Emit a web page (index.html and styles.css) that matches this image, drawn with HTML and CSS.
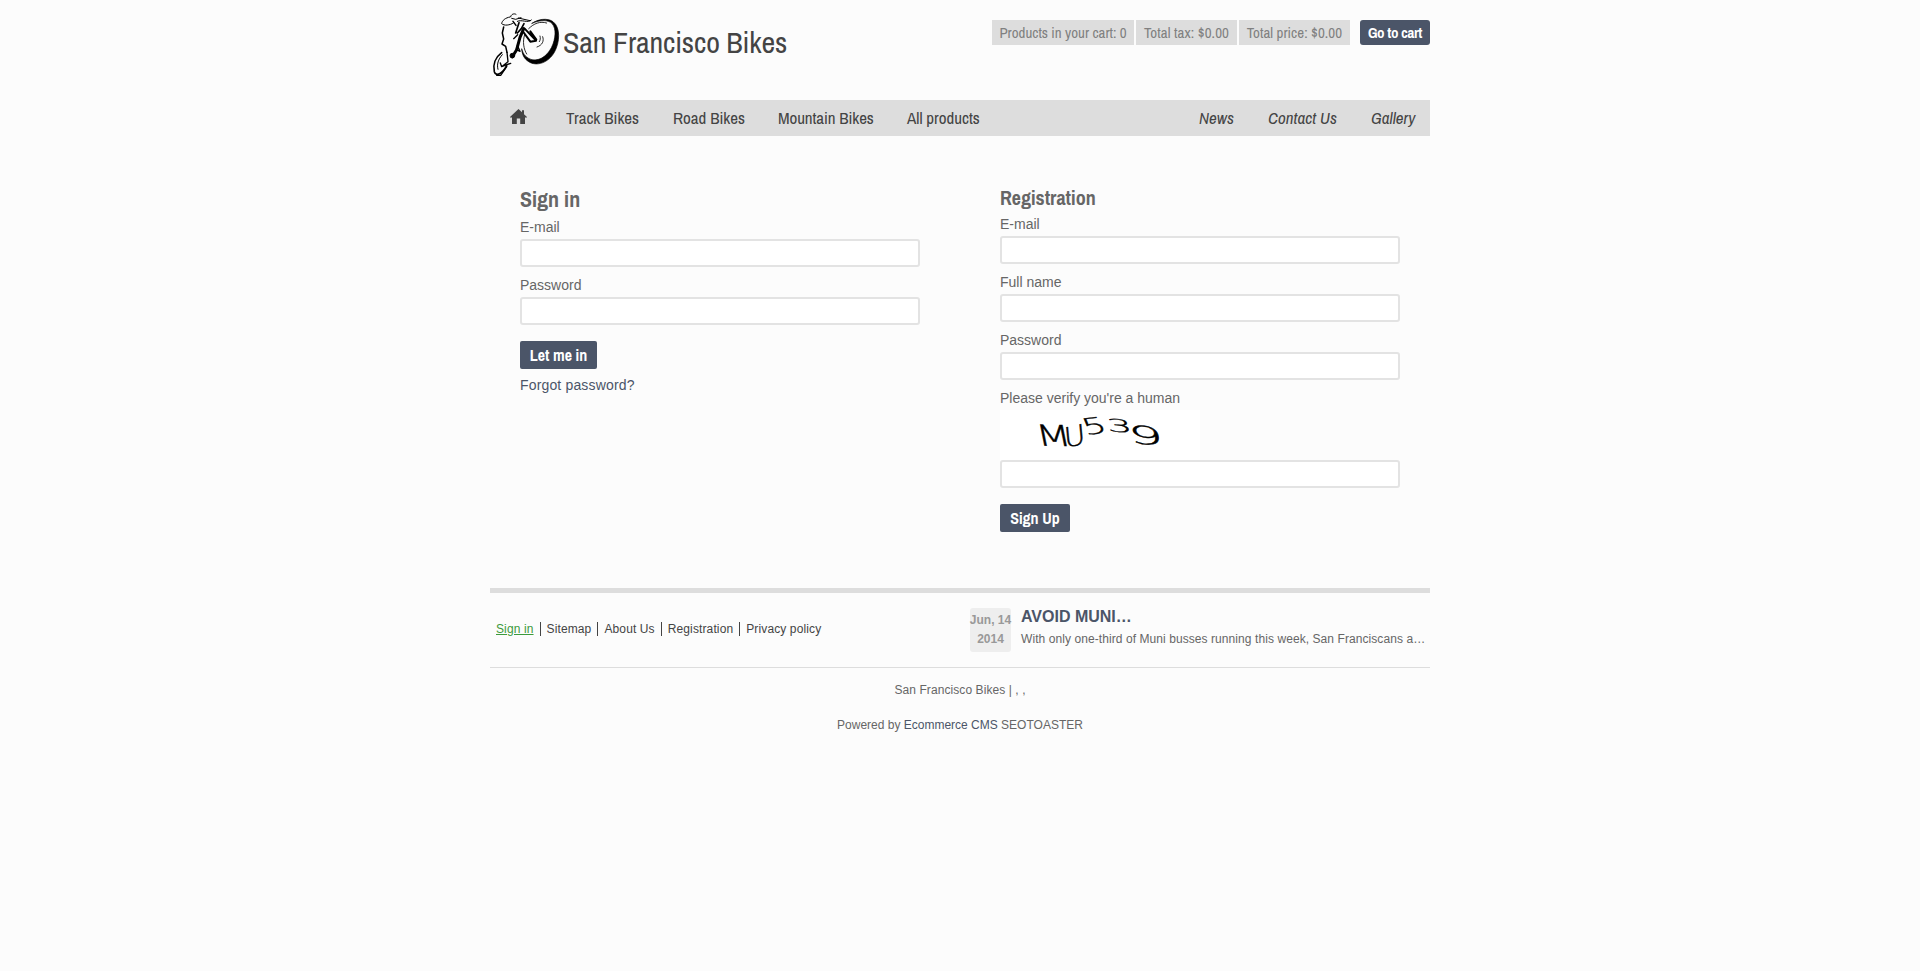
FILE: index.html
```html
<!DOCTYPE html>
<html lang="en">
<head>
<meta charset="utf-8">
<title>San Francisco Bikes</title>
<link rel="stylesheet" href="styles.css">
</head>
<body>
<div class="container">
  <header class="header">
    <a class="brand">
      <svg class="logo" viewBox="0 0 228 222" fill="none" stroke="#000" stroke-linecap="round" stroke-linejoin="round">
        <path fill="#000" stroke-width="2" d="M132 46C150 33 178 29 195 41C218 58 216 103 199 133C182 163 147 177 122 161C108 152 102 139 101 122C106 141 117 151 132 155C159 160 184 138 195 108C205 80 203 54 188 43C172 34 151 38 132 46Z"/>
        <path d="M122 62C138 46 156 39 176 45M110 80C103 100 107 124 116 138M147 117C163 112 169 99 164 86M156 84C158 91 157 96 154 101" stroke-width="2.5"/>
        <path d="M68 26C69 19 78 15 84 19M71 31L83 34L99 29M91 30L126 38M88 40C102 33 119 47 130 36" stroke-width="3"/>
        <path d="M66 27C52 29 42 38 41 47C48 54 66 52 76 45" stroke-width="3"/>
        <path d="M47 57L43 75L47 93L42 108L53 115L57 133M75 40L84 52" stroke-width="4.5"/>
        <path d="M93 44L83 75M108 47L100 62L88 75" stroke-width="5"/>
        <path d="M107 62L96 88L86 125L73 146" stroke-width="9"/>
        <path d="M110 62L144 98L127 101L106 72M127 70L145 95" stroke-width="6"/>
        <path d="M77 92L89 80M88 112L96 130L84 124" stroke-width="4"/>
        <circle cx="73" cy="143" r="7" fill="#000" stroke-width="3"/>
        <path d="M41 134C22 148 14 170 19 191C24 207 43 198 56 173" stroke-width="5"/>
        <path d="M43 140C30 154 26 170 30 184" stroke-width="3"/>
        <path d="M57 133L60 161L41 176M37 165L41 176L68 166M56 176L38 202L26 202" stroke-width="4"/>
      </svg>
      <span class="brand-name">San Francisco Bikes</span>
    </a>
    <div class="cart">
      <span class="cart-item cart-count">Products in your cart: 0</span>
      <span class="cart-item cart-tax">Total tax: $0.00</span>
      <span class="cart-item cart-price">Total price: $0.00</span>
      <a class="cart-button">Go to cart</a>
    </div>
  </header>
  <nav class="nav">
    <svg class="home" viewBox="0 0 17 15"><path fill="#444" d="M8.5 0L12 3.3V1.3H14V5.2L17 8V8.5H15V15H10.2V9.5H6.8V15H2V8.5H0V8Z"/></svg>
    <div class="nav-main"><a class="n1">Track Bikes</a><a class="n2">Road Bikes</a><a class="n3">Mountain Bikes</a><a class="n4">All products</a></div>
    <div class="nav-side"><a class="n5">News</a><a class="n6">Contact Us</a><a class="n7">Gallery</a></div>
  </nav>
  <main class="main">
    <form class="form signin">
      <h2 class="title title-signin">Sign in</h2>
      <label class="label">E-mail</label>
      <input class="input" type="text">
      <label class="label">Password</label>
      <input class="input" type="password">
      <button class="button let-in" type="button">Let me in</button>
      <a class="forgot">Forgot password?</a>
    </form>
    <form class="form register">
      <h3 class="title title-reg">Registration</h3>
      <label class="label">E-mail</label>
      <input class="input" type="text">
      <label class="label">Full name</label>
      <input class="input" type="text">
      <label class="label">Password</label>
      <input class="input" type="password">
      <label class="label">Please verify you're a human</label>
      <svg class="captcha" viewBox="0 0 200 50">
        <text transform="matrix(1.4 .03 .2 1 38 35.5)" font-size="29">M</text>
        <text transform="matrix(1.15 -.25 .1 1.1 65 38)" font-size="25">U</text>
        <text transform="matrix(1.55 -.2 .4 .95 86 25)" font-size="23">5</text>
        <text transform="matrix(1.8 .15 .15 .8 108 21)" font-size="22">3</text>
        <text transform="matrix(2.2 .3 .1 1 129 32)" font-size="25">9</text>
      </svg>
      <input class="input" type="text">
      <button class="button sign-up" type="button">Sign Up</button>
    </form>
  </main>
  <footer class="footer">
    <div class="footer-top">
      <div class="links"><a class="link current">Sign in</a><a class="link">Sitemap</a><a class="link">About Us</a><a class="link">Registration</a><a class="link">Privacy policy</a></div>
      <div class="news">
        <div class="date"><span>Jun, 14</span><span>2014</span></div>
        <div class="news-body">
          <div class="news-title">AVOID MUNI…</div>
          <div class="news-text">With only one-third of Muni busses running this week, San Franciscans a…</div>
        </div>
      </div>
    </div>
    <p class="copy">San Francisco Bikes | , ,</p>
    <p class="powered">Powered by <a class="cms">Ecommerce CMS</a> SEOTOASTER</p>
  </footer>
</div>
</body>
</html>
```
FILE: styles.css
```css
* { box-sizing: border-box; }
body { margin: 0; background: #fcfcfc; color: #666; font: 14px/20px "Liberation Sans", Arial, sans-serif; }
.container { width: 940px; margin: 0 auto; }
.header { height: 100px; display: flex; justify-content: space-between; align-items: flex-start; }
.brand { display: flex; padding-top: 8px; color: #444; }
.logo { width: 76px; height: 74px; margin-left: -2px; }
.brand-name, .cart, .nav, .title, .button { font-family: "Liberation Sans Narrow", "Archivo Narrow", "Liberation Sans", sans-serif; }
.brand-name { font-size: 30px; line-height: 40px; letter-spacing: -.15px; margin: 14px 0 0 -1px; white-space: nowrap; }
.cart { display: flex; gap: 2px; padding-top: 20px; font-size: 15px; line-height: 26px; white-space: nowrap; }
.cart-item { height: 25px; background: #ddd; color: #808080; text-align: center; }
.cart-count { width: 142px; }
.cart-tax { width: 101px; letter-spacing: .1px; }
.cart-price { width: 111px; letter-spacing: .05px; }
.cart-button { width: 70px; height: 25px; margin-left: 8px; border-radius: 3px; background: #4b5568; color: #fff; font-weight: bold; text-align: center; letter-spacing: -.4px; }
.nav { height: 36px; display: flex; align-items: center; background: #ddd; color: #444; font-size: 17px; line-height: 36px; white-space: nowrap; }
.home { width: 17px; height: 15px; margin: 0 39px 3px 20px; }
.nav-main, .nav-side { display: flex; gap: 34px; }
.nav-side { margin-left: auto; padding-right: 14px; font-style: italic; }
.n1 { width: 73px; }
.n2 { width: 71px; }
.n3 { width: 95px; letter-spacing: -.08px; }
.n4 { width: 73px; }
.n5 { width: 35px; }
.n6 { width: 69px; }
.n7 { width: 45px; }
.main { display: flex; gap: 80px; padding: 48px 30px 0; height: 452px; }
.form { width: 400px; display: flex; flex-direction: column; align-items: flex-start; }
.title { margin: 0; font-weight: bold; }
.title-signin { font-size: 22px; line-height: 30px; margin-bottom: 3px; }
.title-reg { font-size: 20px; line-height: 27px; margin-bottom: 3px; }
.label { height: 22px; line-height: 20px; }
.input { display: block; width: 400px; height: 28px; margin: 0 0 8px; padding: 0 6px; border: 2px solid #e3e3e3; border-radius: 3px; background: #fff; }
.button { height: 28px; margin: 8px 0 6px; padding: 0; border: 0; border-radius: 2px; background: #4b5568; color: #fff; font-size: 16px; font-weight: bold; line-height: 28px; white-space: nowrap; }
.let-in { width: 77px; }
.sign-up { width: 70px; }
.forgot { color: #4b5568; letter-spacing: .16px; }
.captcha { width: 200px; height: 50px; background: #fff; fill: #000; }
.captcha text { font-family: "DejaVu Sans", sans-serif; font-weight: 200; stroke: #000; stroke-width: .4px; }
.footer { border-top: 5px solid #ddd; font-size: 12px; }
.footer-top { height: 75px; display: flex; border-bottom: 1px solid #ddd; }
.links { width: 480px; display: flex; padding: 29px 0 0 6px; color: #444; letter-spacing: .12px; }
.link { height: 14px; line-height: 14px; padding-right: 6px; margin-right: 6px; border-right: 1px solid #444; }
.link:last-child { border: 0; }
.current { color: #3c9a3c; text-decoration: underline; }
.news { display: flex; width: 460px; padding-top: 15px; }
.date { width: 41px; height: 44px; padding-top: 3px; border-radius: 3px; background: #eee; color: #999; display: flex; flex-direction: column; align-items: center; font-weight: bold; line-height: 19px; white-space: nowrap; }
.news-body { margin-left: 10px; white-space: nowrap; }
.news-title { color: #4b5568; font-size: 16px; font-weight: bold; line-height: 18px; }
.news-text { line-height: 26px; letter-spacing: .075px; }
.copy { margin: 12px 0 15px; text-align: center; letter-spacing: .08px; }
.powered { margin: 0; text-align: center; }
.cms { color: #4b5568; }
```
